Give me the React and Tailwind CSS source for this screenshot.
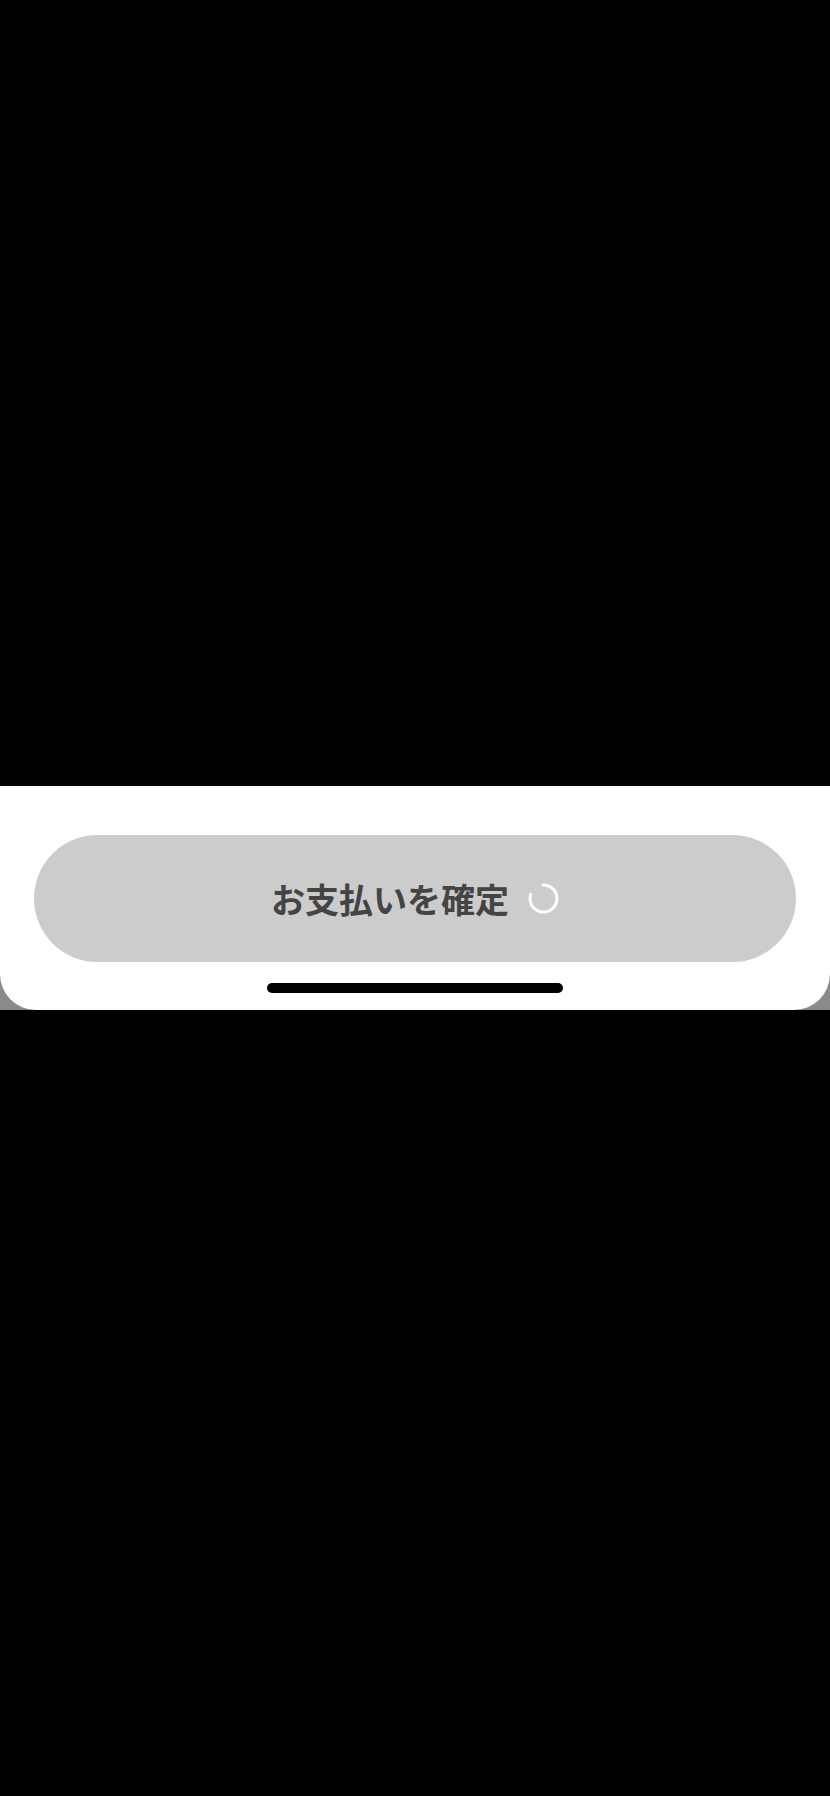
import React from 'react'

function Spinner() {
    return (
        <svg width="31" height="31" viewBox="0 0 31 31" className="shrink-0">
            <circle
                cx="15.5"
                cy="15.5"
                r="13.5"
                fill="none"
                stroke="#ffffff"
                strokeWidth="3"
                strokeLinecap="round"
                strokeDasharray="68 17"
                transform="rotate(-92 15.5 15.5)"
            />
        </svg>
    )
}

export default function App() {
    return (
        <div className="min-h-[1796px] w-full bg-black">
            <div className="h-[786px]" />
            <div className="bg-[#8a8a8a]">
                <div className="bg-white rounded-b-[36px] px-[34px] pt-[49px] pb-[17px] flex flex-col items-center">
                    <button
                        type="button"
                        className="w-full h-[127px] rounded-full bg-[#cccccc] flex items-center justify-center gap-[19px]"
                    >
                        <span
                            className="text-[34px] font-bold text-[#444444] leading-none"
                            style={{ fontFamily: '"Noto Sans CJK JP", "Noto Sans", sans-serif' }}
                        >
                            お支払いを確定
                        </span>
                        <Spinner />
                    </button>
                    <div className="mt-[21px] w-[296px] h-[10px] rounded-full bg-black" />
                </div>
            </div>
        </div>
    )
}
